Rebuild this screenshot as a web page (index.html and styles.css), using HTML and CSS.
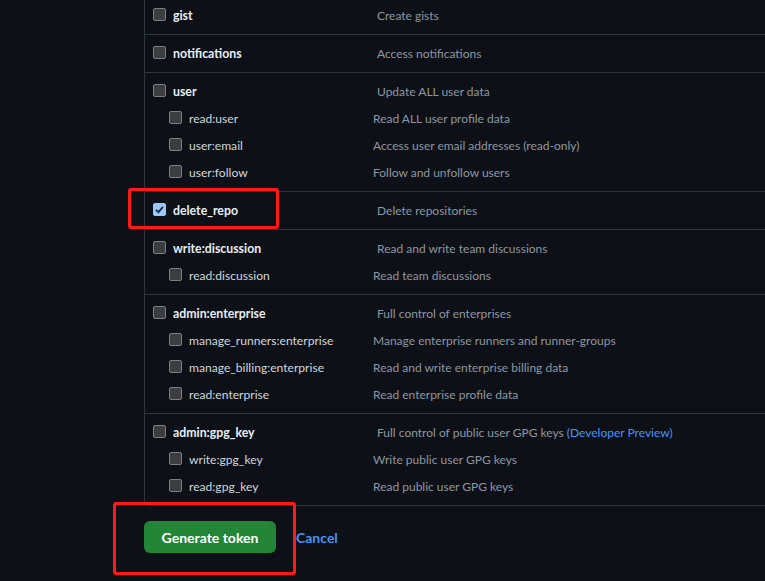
FILE: index.html
```html
<!DOCTYPE html>
<html>
<head>
<meta charset="utf-8">
<link rel="stylesheet" href="styles.css">
</head>
<body>
<div class="page">
  <div class="scopes">
    <div class="group">
      <div class="row parent"><span class="cb"></span><span class="name">gist</span><span class="desc">Create gists</span></div>
    </div>
    <div class="group">
      <div class="row parent"><span class="cb"></span><span class="name">notifications</span><span class="desc">Access notifications</span></div>
    </div>
    <div class="group">
      <div class="row parent"><span class="cb"></span><span class="name">user</span><span class="desc">Update ALL user data</span></div>
      <div class="row sub"><span class="cb"></span><span class="name">read:user</span><span class="desc">Read ALL user profile data</span></div>
      <div class="row sub"><span class="cb"></span><span class="name">user:email</span><span class="desc">Access user email addresses (read-only)</span></div>
      <div class="row sub"><span class="cb"></span><span class="name">user:follow</span><span class="desc">Follow and unfollow users</span></div>
    </div>
    <div class="group">
      <div class="row parent"><span class="cb checked"><svg viewBox="0 0 13 13" width="13" height="13"><path d="M3 6.8 L5.4 9.2 L10 3.8" fill="none" stroke="#1e2a3a" stroke-width="1.8"/></svg></span><span class="name">delete_repo</span><span class="desc">Delete repositories</span></div>
      <div class="mark mark-delete"></div>
    </div>
    <div class="group">
      <div class="row parent"><span class="cb"></span><span class="name">write:discussion</span><span class="desc">Read and write team discussions</span></div>
      <div class="row sub"><span class="cb"></span><span class="name">read:discussion</span><span class="desc">Read team discussions</span></div>
    </div>
    <div class="group">
      <div class="row parent"><span class="cb"></span><span class="name">admin:enterprise</span><span class="desc">Full control of enterprises</span></div>
      <div class="row sub"><span class="cb"></span><span class="name">manage_runners:enterprise</span><span class="desc">Manage enterprise runners and runner-groups</span></div>
      <div class="row sub"><span class="cb"></span><span class="name">manage_billing:enterprise</span><span class="desc">Read and write enterprise billing data</span></div>
      <div class="row sub"><span class="cb"></span><span class="name">read:enterprise</span><span class="desc">Read enterprise profile data</span></div>
    </div>
    <div class="group last">
      <div class="row parent"><span class="cb"></span><span class="name">admin:gpg_key</span><span class="desc">Full control of public user GPG keys <a class="link">(Developer Preview)</a></span></div>
      <div class="row sub"><span class="cb"></span><span class="name">write:gpg_key</span><span class="desc">Write public user GPG keys</span></div>
      <div class="row sub"><span class="cb"></span><span class="name">read:gpg_key</span><span class="desc">Read public user GPG keys</span></div>
    </div>
  </div>
  <div class="actions">
    <button class="btn">Generate token</button>
    <a class="cancel">Cancel</a>
    <div class="mark mark-btn"></div>
  </div>
</div>
</body>
</html>
```

FILE: styles.css
```css
html, body {
  margin: 0;
  padding: 0;
  background: #0d1117;
  height: 100%;
  overflow: hidden;
}
body {
  font-family: Lato, "Liberation Sans", sans-serif;
  font-size: 12px;
  color: #c9d1d9;
}
.page {
  margin-top: -3px;
  margin-left: 144px;
}
.scopes {
  border-left: 1px solid #30363d;
  border-bottom: 1px solid #30363d;
  border-bottom-left-radius: 6px;
}
.group {
  position: relative;
  padding: 5px 0;
  border-bottom: 1px solid #30363d;
}
.group.last {
  border-bottom: none;
}
.row {
  display: flex;
  align-items: center;
  height: 27px;
  padding-left: 8px;
}
.row.sub {
  padding-left: 24px;
}
.cb {
  width: 11px;
  height: 11px;
  border: 1px solid #7b7f85;
  background: #3b3d41;
  border-radius: 2px;
  flex: none;
  margin-top: -3px;
  display: flex;
}
.cb.checked {
  background: #99c8ff;
  border-color: #99c8ff;
}
.cb.checked svg {
  margin: -1px;
}
.name {
  margin-left: 7px;
  width: 204px;
  flex: none;
  color: #d0d7de;
  font-size: 12.1px;
}
.parent .name {
  width: 204px;
  font-weight: 700;
  color: #e6edf3;
  font-size: 12.3px;
}
.row.sub .name {
  width: 184px;
}
.desc {
  color: #8d96a0;
  font-size: 12px;
}
.link {
  color: #4493f8;
}
.actions {
  display: flex;
  align-items: center;
  gap: 20px;
  margin-top: 15px;
  position: relative;
}
.btn {
  width: 132px;
  height: 32px;
  background: #238636;
  color: #ffffff;
  border: none;
  border-radius: 6px;
  font-family: inherit;
  font-size: 14px;
  font-weight: 700;
  padding: 0;
}
.cancel {
  color: #4493f8;
  font-size: 14px;
  font-weight: 700;
}
.mark {
  position: absolute;
  border: 3px solid #ff1a1a;
  border-radius: 3px;
  pointer-events: none;
}
.mark-delete {
  left: -17px;
  top: -4px;
  width: 145px;
  height: 35px;
}
.mark-btn {
  left: -31px;
  top: -19px;
  width: 177px;
  height: 67px;
}
```
